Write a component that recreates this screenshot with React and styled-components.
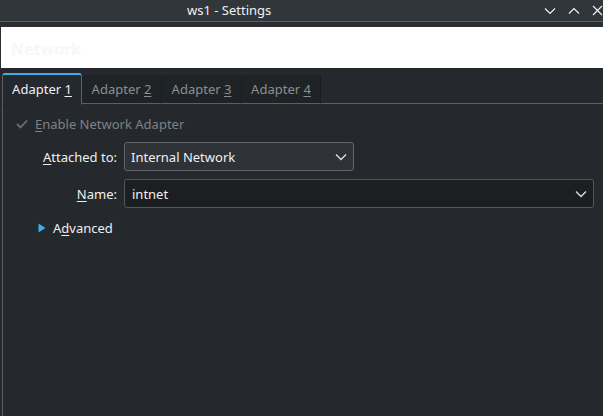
import React from "react";
import styled, { createGlobalStyle } from "styled-components";

const Global = createGlobalStyle`
  html, body { margin: 0; padding: 0; }
  body {
    width: 603px; height: 416px; overflow: hidden;
    background: #2a2e32;
    font-family: "Noto Sans", "DejaVu Sans", sans-serif;
    font-size: 13px;
    color: #eff0f1;
  }
`;

const Window = styled.div`
  width: 603px; height: 416px;
  display: flex; flex-direction: column;
  background: #2a2e32;
`;

const TitleBar = styled.div`
  height: 21px;
  flex: none;
  background: #31363b;
  border-bottom: 1px solid #5b6065;
  position: relative;
  display: flex; align-items: center;
  padding-left: 187px;
`;

const Title = styled.div`
  font-size: 13px; color: #eff0f1; margin-top: -2px;
`;

const WinButtons = styled.div`
  position: absolute; right: -3px; top: 0; height: 21px;
  display: flex; align-items: center; gap: 8px;
`;

const WinBtn = styled.svg`
  width: 16px; height: 16px; display: block;
`;

const Banner = styled.div`
  margin: 5px 0 0 1px;
  height: 41px;
  background: #ffffff;
  display: flex; align-items: center;
  padding-left: 10px;
  flex: none;
`;

const BannerText = styled.div`
  font-size: 16px; font-weight: 700; color: #f7f7f7; margin-top: 2px;
`;

const Body = styled.div`
  flex: 1;
  display: flex; flex-direction: column;
  padding: 5px 0 0 2px;
  background: #25282c;
`;

const TabBar = styled.div`
  display: flex; height: 31px; flex: none;
  position: relative; z-index: 1;
`;

const Tab = styled.div`
  width: ${p => p.$w}px;
  box-sizing: border-box;
  display: flex; align-items: center; justify-content: center;
  padding-bottom: ${p => (p.$active ? 2 : 1)}px;
  color: ${p => (p.$active ? "#eff0f1" : "#8a8e92")};
  background: ${p => (p.$active ? "#25282c" : "#202326")};
  border-top: ${p => (p.$active ? "2px solid #3daee9" : "none")};
  border-left: ${p => (p.$active ? "1px solid #5b6065" : "none")};
  border-right: ${p => (p.$active ? "1px solid #5b6065" : "1px solid #1b1d20")};
  border-bottom: ${p => (p.$active ? "1px solid #25282c" : "1px solid #5b6065")};
  border-radius: 3px 3px 0 0;
  margin-top: ${p => (p.$active ? 0 : 2)}px;
  height: ${p => (p.$active ? 32 : 29)}px;
`;

const U = styled.span`
  text-decoration: underline;
  text-underline-offset: 2px;
`;

const Pane = styled.div`
  flex: 1;
  border-left: 1px solid #5b6065;
  border-top: 1px solid #5b6065;
  margin-top: -1px;
  padding: 11px 0 0 13px;
  display: flex; flex-direction: column;
`;

const CheckRow = styled.div`
  display: flex; align-items: center; gap: 7px;
  color: #7e8286; height: 18px;
`;

const Form = styled.div`
  display: grid;
  grid-template-columns: 77px 1fr;
  column-gap: 7px;
  row-gap: 8px;
  margin: 9px 0 0 24px;
  align-items: center;
`;

const Label = styled.div`
  text-align: right; color: #eff0f1;
`;

const Combo = styled.div`
  box-sizing: border-box;
  height: 29px;
  width: ${p => p.$w}px;
  border: 1px solid ${p => (p.$edit ? "#53575b" : "#62666a")};
  border-radius: 3px;
  background: ${p => (p.$edit ? "#1c1f22" : "#2f3337")};
  display: flex; align-items: center; justify-content: space-between;
  padding: 0 6px 0 ${p => (p.$edit ? 7 : 6)}px;
  color: #eff0f1;
`;

const AdvRow = styled.div`
  display: flex; align-items: center; gap: 7px;
  margin: 11px 0 0 22px; height: 18px;
`;

const Chevron = ({ color = "#dfe1e3" }) => (
  <svg width="12" height="8" viewBox="0 0 12 8">
    <path d="M1 1.5 L6 6.5 L11 1.5" fill="none" stroke={color} strokeWidth="1.3" />
  </svg>
);

export default function App() {
  return (
    <Window>
      <Global />
      <TitleBar>
        <Title>ws1 - Settings</Title>
        <WinButtons>
          <WinBtn viewBox="0 0 16 16">
            <path d="M3 5.5 L8 10.5 L13 5.5" fill="none" stroke="#eff0f1" strokeWidth="1.2" />
          </WinBtn>
          <WinBtn viewBox="0 0 16 16">
            <path d="M3 10.5 L8 5.5 L13 10.5" fill="none" stroke="#eff0f1" strokeWidth="1.2" />
          </WinBtn>
          <WinBtn viewBox="0 0 16 16">
            <path d="M3 3 L12 12 M12 3 L3 12" fill="none" stroke="#eff0f1" strokeWidth="1.2" />
          </WinBtn>
        </WinButtons>
      </TitleBar>
      <Banner>
        <BannerText>Network</BannerText>
      </Banner>
      <Body>
        <TabBar>
          <Tab $active $w={80}>Adapter&nbsp;<U>1</U></Tab>
          <Tab $w={80}>Adapter&nbsp;<U>2</U></Tab>
          <Tab $w={80}>Adapter&nbsp;<U>3</U></Tab>
          <Tab $w={79}>Adapter&nbsp;<U>4</U></Tab>
        </TabBar>
        <Pane>
          <CheckRow>
            <svg width="12" height="10" viewBox="0 0 12 10">
              <path d="M1 5 L4.5 8.5 L11 1.5" fill="none" stroke="#6c7074" strokeWidth="1.8" />
            </svg>
            <span><U>E</U>nable Network Adapter</span>
          </CheckRow>
          <Form>
            <Label><U>A</U>ttached to:</Label>
            <Combo $w={230}>
              <span>Internal Network</span>
              <Chevron />
            </Combo>
            <Label><U>N</U>ame:</Label>
            <Combo $edit $w={470}>
              <span>intnet</span>
              <Chevron />
            </Combo>
          </Form>
          <AdvRow>
            <svg width="8" height="10" viewBox="0 0 8 10">
              <path d="M0.5 0.5 L7.5 5 L0.5 9.5 Z" fill="#3daee9" />
            </svg>
            <span>A<U>d</U>vanced</span>
          </AdvRow>
        </Pane>
      </Body>
    </Window>
  );
}
